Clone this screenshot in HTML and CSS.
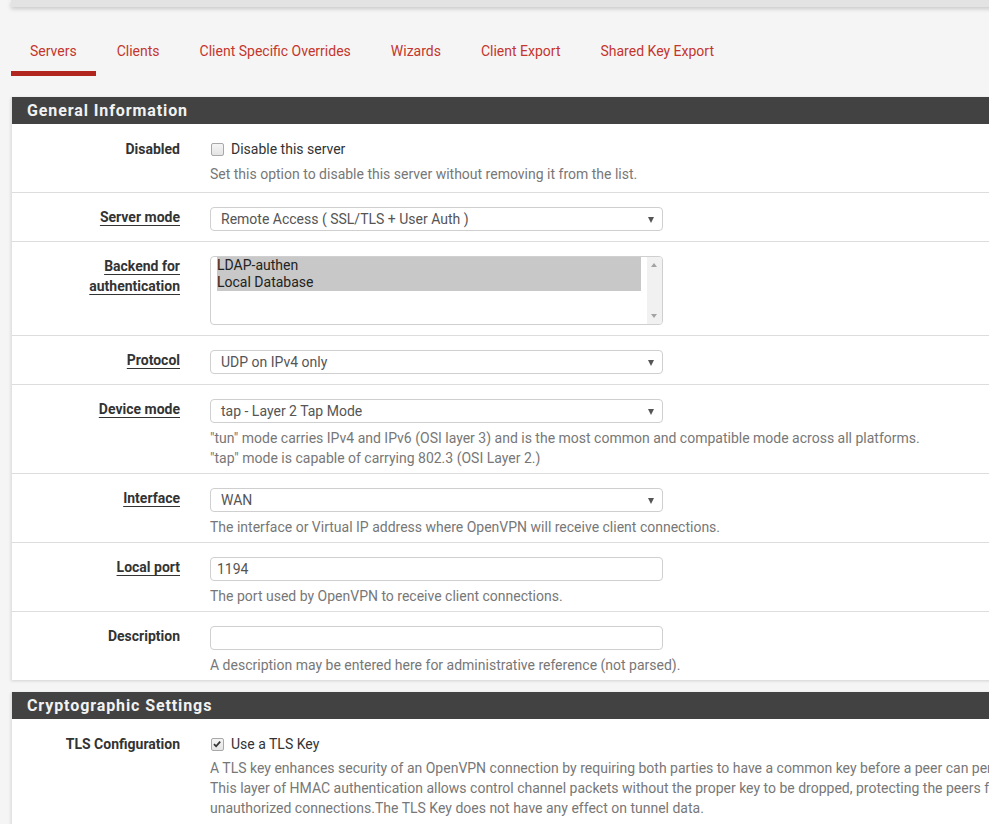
FILE: index.html
```html
<!DOCTYPE html>
<html>
<head>
<meta charset="utf-8">
<link rel="stylesheet" href="styles.css">
</head>
<body>
<div class="topbar"></div>
<div class="page">
  <ul class="tabs">
    <li class="tab active">Servers</li>
    <li class="tab">Clients</li>
    <li class="tab">Client Specific Overrides</li>
    <li class="tab">Wizards</li>
    <li class="tab">Client Export</li>
    <li class="tab">Shared Key Export</li>
  </ul>

  <section class="panel">
    <h2 class="panel-title">General Information</h2>
    <div class="panel-body">
      <div class="row row-check">
        <div class="label">Disabled</div>
        <div class="ctrl">
          <div class="check-line"><span class="cbox"></span><span>Disable this server</span></div>
          <div class="help">Set this option to disable this server without removing it from the list.</div>
        </div>
      </div>
      <div class="row">
        <div class="label"><span class="req">Server mode</span></div>
        <div class="ctrl">
          <div class="select"><span>Remote Access ( SSL/TLS + User Auth )</span><span class="caret"></span></div>
        </div>
      </div>
      <div class="row">
        <div class="label"><span class="req">Backend for authentication</span></div>
        <div class="ctrl">
          <div class="listbox">
            <div class="options">
              <div class="opt sel">LDAP-authen</div>
              <div class="opt sel">Local Database</div>
            </div>
            <div class="scrollbar"><span class="sb-up"></span><span class="sb-down"></span></div>
          </div>
        </div>
      </div>
      <div class="row">
        <div class="label"><span class="req">Protocol</span></div>
        <div class="ctrl">
          <div class="select"><span>UDP on IPv4 only</span><span class="caret"></span></div>
        </div>
      </div>
      <div class="row">
        <div class="label"><span class="req">Device mode</span></div>
        <div class="ctrl">
          <div class="select"><span>tap - Layer 2 Tap Mode</span><span class="caret"></span></div>
          <div class="help">"tun" mode carries IPv4 and IPv6 (OSI layer 3) and is the most common and compatible mode across all platforms.<br>"tap" mode is capable of carrying 802.3 (OSI Layer 2.)</div>
        </div>
      </div>
      <div class="row">
        <div class="label"><span class="req">Interface</span></div>
        <div class="ctrl">
          <div class="select"><span>WAN</span><span class="caret"></span></div>
          <div class="help">The interface or Virtual IP address where OpenVPN will receive client connections.</div>
        </div>
      </div>
      <div class="row">
        <div class="label"><span class="req">Local port</span></div>
        <div class="ctrl">
          <div class="input">1194</div>
          <div class="help">The port used by OpenVPN to receive client connections.</div>
        </div>
      </div>
      <div class="row">
        <div class="label">Description</div>
        <div class="ctrl">
          <div class="input"></div>
          <div class="help">A description may be entered here for administrative reference (not parsed).</div>
        </div>
      </div>
    </div>
  </section>

  <section class="panel">
    <h2 class="panel-title">Cryptographic Settings</h2>
    <div class="panel-body">
      <div class="row row-check">
        <div class="label">TLS Configuration</div>
        <div class="ctrl">
          <div class="check-line"><span class="cbox checked"><svg viewBox="0 0 12 12" width="12" height="12"><path d="M3 6.2 L5.1 8.3 L9.2 3.6" fill="none" stroke="#333" stroke-width="1.8"/></svg></span><span>Use a TLS Key</span></div>
          <div class="help help-tight">A TLS key enhances security of an OpenVPN connection by requiring both parties to have a common key before a peer can perform a TLS handshake.<br>This layer of HMAC authentication allows control channel packets without the proper key to be dropped, protecting the peers from attack or<br>unauthorized connections.The TLS Key does not have any effect on tunnel data.</div>
        </div>
      </div>
    </div>
  </section>
</div>
</body>
</html>
```

FILE: styles.css
```css
html, body {
  margin: 0;
  padding: 0;
  overflow: hidden;
}
body {
  background: #f5f5f5;
  font-family: Roboto, "Liberation Sans", sans-serif;
  font-size: 14px;
  line-height: 20px;
  color: #333;
}
.topbar {
  height: 7px;
  margin-left: 11px;
  width: 1200px;
  background: #e3e3e3;
  box-shadow: 0 2px 4px rgba(0, 0, 0, 0.18);
}
.page {
  margin-left: 11px;
  width: 1100px;
}
.tabs {
  list-style: none;
  margin: 23px 0 0;
  padding: 0;
  display: flex;
}
.tab {
  padding: 11px 19px 10px;
  margin-right: 2px;
  color: #c4352d;
  border-bottom: 5px solid transparent;
}
.tab.active {
  border-bottom-color: #b1261f;
}
.panel {
  margin-top: 21px;
  background: #fff;
  box-shadow: 0 1px 3px rgba(0, 0, 0, 0.14);
  border-left: 1px solid #e2e2e2;
}
.panel + .panel {
  margin-top: 12px;
}
.panel-title {
  margin: 0;
  height: 27px;
  line-height: 27px;
  background: #424242;
  color: #f2f2f2;
  font-size: 16px;
  font-weight: 700;
  letter-spacing: 0.9px;
  padding-left: 15px;
}
.row {
  display: flex;
  padding: 14px 0 10px;
  border-top: 1px solid #dddddd;
}
.row:first-child {
  border-top: none;
}
.row-check {
  padding-top: 15px;
  padding-bottom: 13px;
}
.label {
  flex: 0 0 183px;
  width: 183px;
  box-sizing: border-box;
  padding: 0 15px;
  text-align: right;
  font-weight: 700;
  color: #333;
}
.req {
  text-decoration: underline;
  text-underline-offset: 3px;
}
.ctrl {
  padding-left: 15px;
  flex: 1;
  min-width: 0;
}
.check-line {
  display: flex;
  align-items: center;
  height: 20px;
  color: #333;
}
.cbox {
  width: 11px;
  height: 11px;
  margin-left: 1px;
  margin-right: 7px;
  border: 1px solid #a8a8a8;
  border-radius: 2px;
  background: linear-gradient(#f5f5f5, #e4e4e4);
}
.cbox svg {
  display: block;
  margin: -1px 0 0 -1px;
}
.help {
  margin-top: 5px;
  margin-bottom: -5px;
  color: #777;
  white-space: nowrap;
}
.help-tight {
  margin-top: 4px;
}
.select, .input {
  width: 453px;
  height: 24px;
  box-sizing: border-box;
  border: 1px solid #cfcfcf;
  border-radius: 4px;
  background: #fff;
  color: #555;
  display: flex;
  align-items: center;
  justify-content: space-between;
  padding: 0 8px 0 10px;
}
.input {
  padding-left: 6px;
}
.caret {
  width: 0;
  height: 0;
  border-left: 3.5px solid transparent;
  border-right: 3.5px solid transparent;
  border-top: 6px solid #555;
  margin-top: 1px;
}
.listbox {
  width: 453px;
  height: 69px;
  box-sizing: border-box;
  border: 1px solid #cfcfcf;
  border-radius: 4px;
  background: #fff;
  display: flex;
  overflow: hidden;
}
.options {
  flex: 1;
  padding: 0 6px;
}
.opt {
  line-height: 17px;
  height: 17px;
  color: #222;
}
.opt.sel {
  background: #c8c8c8;
}
.scrollbar {
  width: 15px;
  background: #f1f1f1;
  position: relative;
}
.sb-up, .sb-down {
  position: absolute;
  left: 4px;
  width: 0;
  height: 0;
  border-left: 3.5px solid transparent;
  border-right: 3.5px solid transparent;
}
.sb-up {
  top: 6px;
  border-bottom: 4px solid #a3a3a3;
}
.sb-down {
  bottom: 6px;
  border-top: 4px solid #a3a3a3;
}
```
